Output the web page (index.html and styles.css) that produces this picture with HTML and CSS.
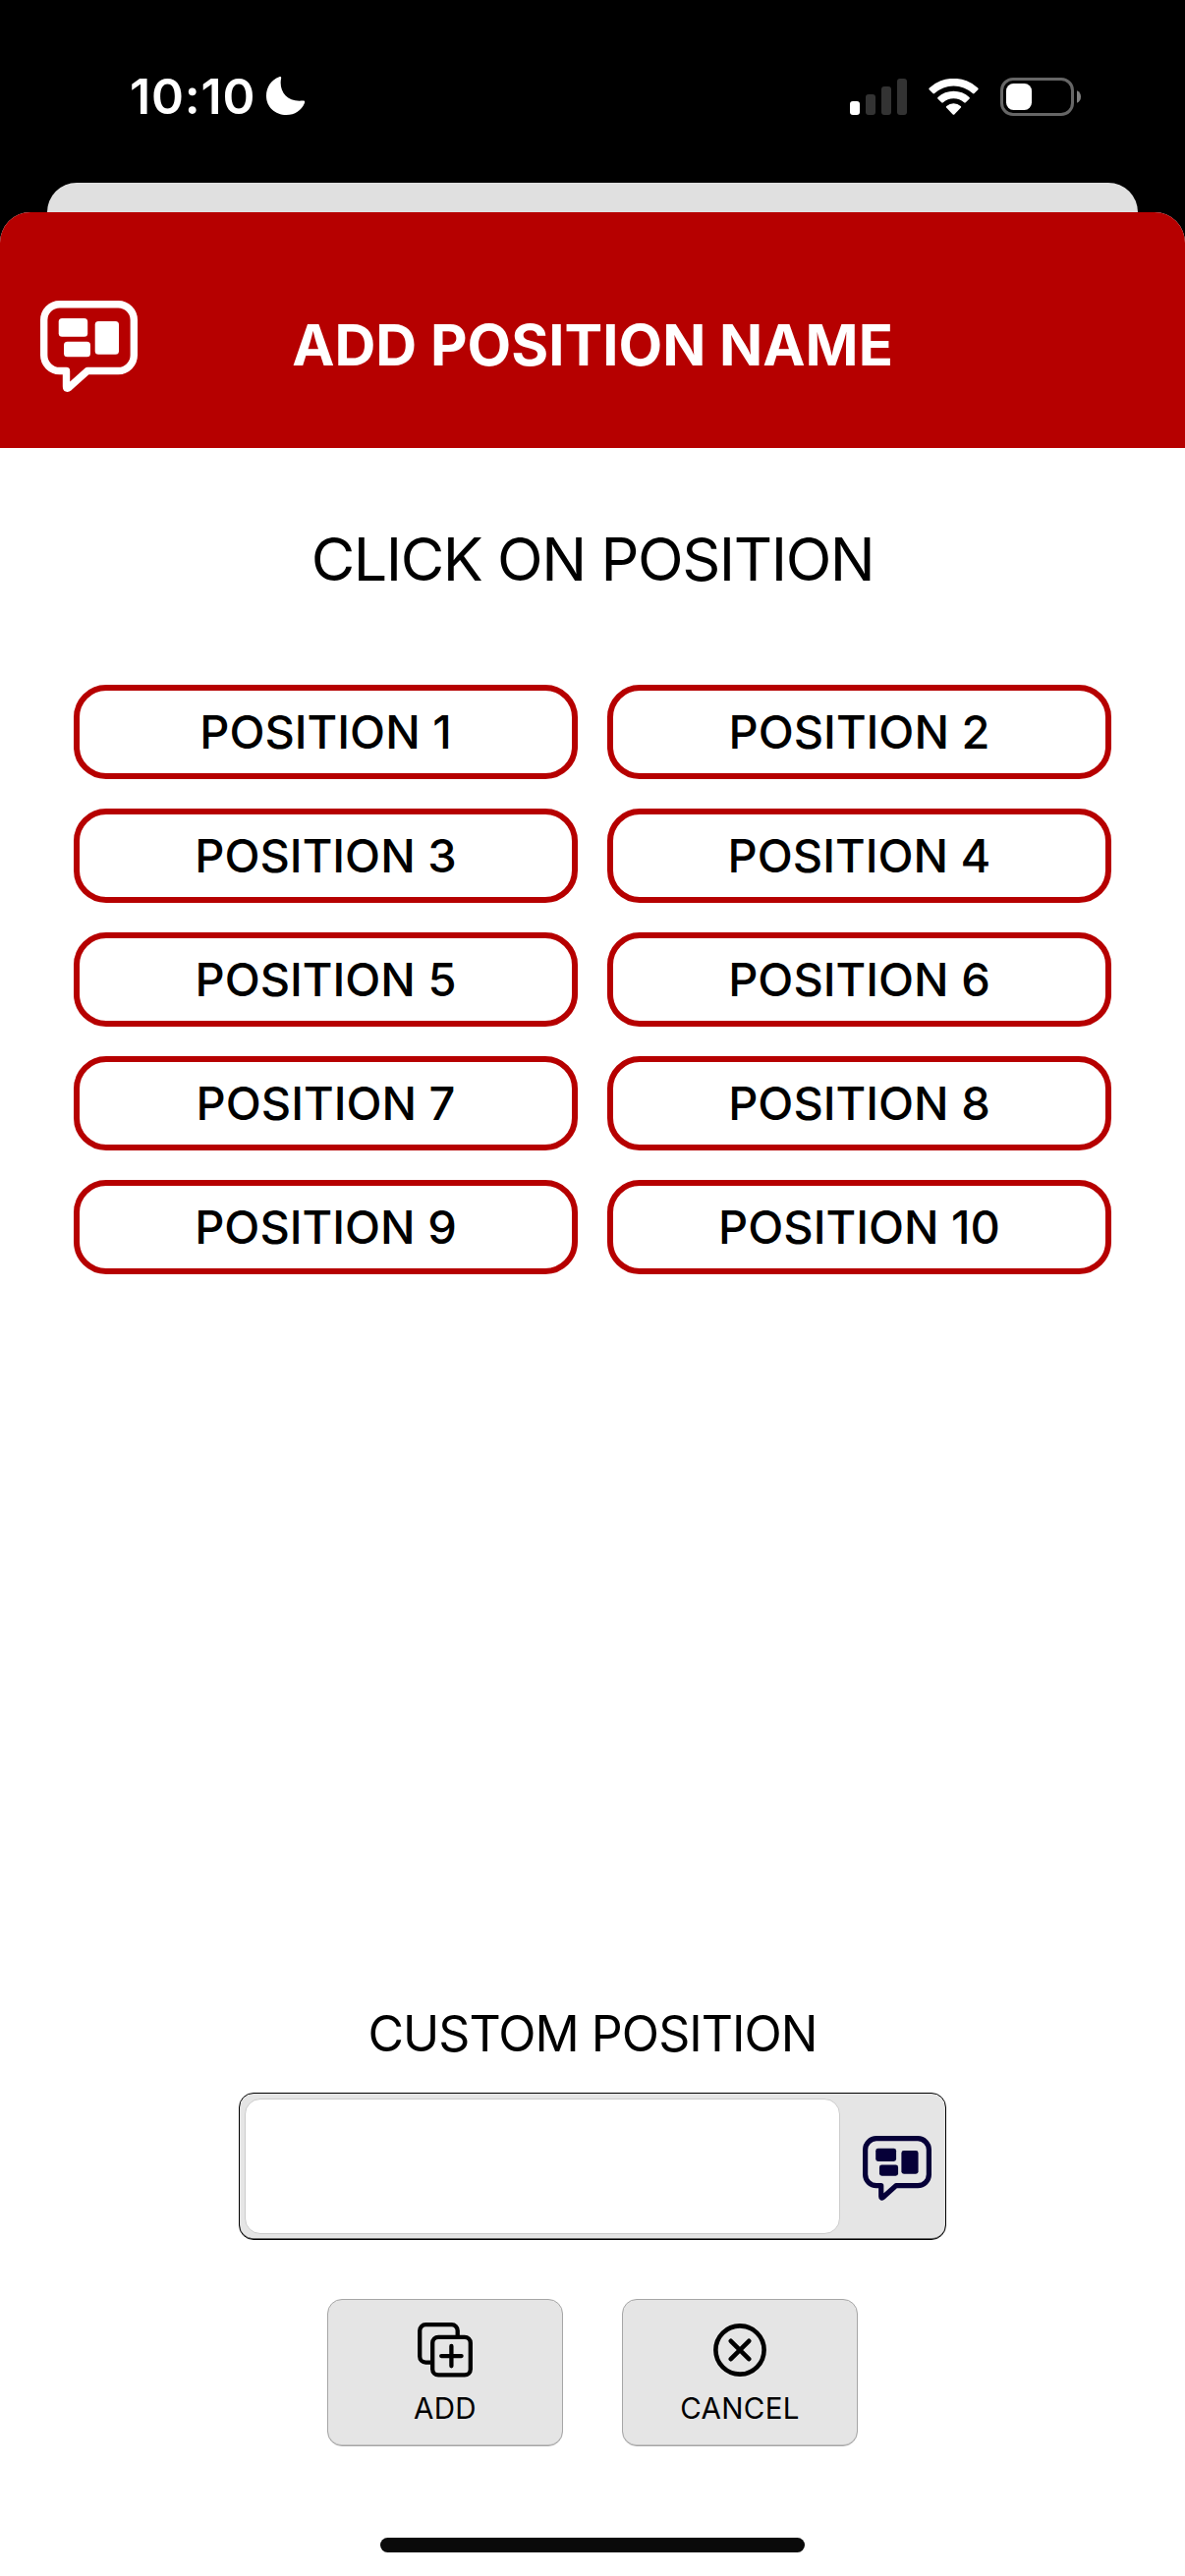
FILE: index.html
```html
<!DOCTYPE html>
<html lang="en">
<head>
    <meta charset="UTF-8">
    <meta name="viewport" content="width=device-width, initial-scale=1.0">
    <title>Add Position Name</title>
    <link rel="stylesheet" href="styles.css">
</head>
<body>
    <svg class="defs" width="0" height="0">
        <symbol id="bubble" viewBox="0 0 99 93">
            <path d="M19.7 3.7H79.3A16 16 0 0 1 95.3 19.7V55.5A16 16 0 0 1 79.3 71.5H48L29.3 88.3Q26.5 90.6 26.5 87.2V71.5H19.7A16 16 0 0 1 3.7 55.5V19.7A16 16 0 0 1 19.7 3.7Z" fill="none" stroke="currentColor" stroke-width="7.4" stroke-linejoin="round"/>
            <rect x="18.7" y="18" width="29.5" height="18.7" rx="3.5" fill="currentColor"/>
            <rect x="24" y="41.7" width="27" height="15.6" rx="3.5" fill="currentColor"/>
            <rect x="55.7" y="21" width="24.3" height="33.7" rx="3.5" fill="currentColor"/>
        </symbol>
    </svg>

    <div class="status-bar">
        <div class="status-left">
            <span class="time">10:10</span>
            <svg class="moon" width="40" height="40" viewBox="0 0 40 40">
                <path d="M13.2 .2C14.7-.3 15.5 .5 15.1 1.8C12.6 14.5 20.5 26.2 36.8 24.6C39 24.3 39.6 25.4 38.9 27C35.8 34.4 29 39 20.5 39C9 39 0 31 0 19.5C0 10.5 5.3 3 13.2 .2Z" fill="#fff"/>
            </svg>
        </div>
        <div class="status-right">
            <svg width="58" height="37" viewBox="0 0 58 37">
                <rect x="0" y="23" width="10" height="14" rx="3" fill="#fff"/>
                <rect x="16" y="16" width="10" height="21" rx="3" fill="#333"/>
                <rect x="32" y="8" width="10" height="29" rx="3" fill="#333"/>
                <rect x="48" y="0" width="10" height="37" rx="3" fill="#333"/>
            </svg>
            <svg class="wifi" width="51" height="37" viewBox="0 0 51 37" fill="#fff">
                <path d="M.6 11.2Q0 10.3 .8 9.5A36.4 36.4 0 0 1 50.2 9.5Q51 10.3 50.4 11.2L46.6 15Q45.8 15.8 44.9 15A28.6 28.6 0 0 0 6.1 15Q5.2 15.8 4.4 15Z"/>
                <path d="M9.3 20.4Q8.8 19.6 9.5 18.9A23.6 23.6 0 0 1 41.5 18.9Q42.2 19.6 41.7 20.4L37.8 24.3Q37 25.1 36.1 24.3A15.6 15.6 0 0 0 14.9 24.3Q14 25.1 13.2 24.3Z"/>
                <path d="M18.1 29.6Q17.4 28.8 18.3 28A11 11 0 0 1 32.7 28Q33.6 28.8 32.9 29.6L26.3 36.4Q25.5 37.2 24.7 36.4Z"/>
            </svg>
            <svg class="battery" width="83" height="39" viewBox="0 0 83 39">
                <rect x="1.5" y="1.5" width="72" height="36" rx="11.5" fill="none" stroke="#666" stroke-width="3"/>
                <rect x="6" y="6" width="26" height="27" rx="7.5" fill="#fff"/>
                <path d="M78 13.2Q82 15 82 19.5T78 25.8Z" fill="#808080"/>
            </svg>
        </div>
    </div>

    <div class="back-card"></div>

    <div class="sheet">
        <div class="header">
            <svg class="header-icon"><use href="#bubble"/></svg>
            <h1>ADD POSITION NAME</h1>
        </div>

        <h2>CLICK ON POSITION</h2>

        <div class="positions">
            <button class="position">POSITION 1</button>
            <button class="position">POSITION 2</button>
            <button class="position">POSITION 3</button>
            <button class="position">POSITION 4</button>
            <button class="position">POSITION 5</button>
            <button class="position">POSITION 6</button>
            <button class="position">POSITION 7</button>
            <button class="position">POSITION 8</button>
            <button class="position">POSITION 9</button>
            <button class="position">POSITION 10</button>
        </div>

        <div class="custom">
            <label for="custom">CUSTOM POSITION</label>
            <div class="input-box">
                <input type="text" id="custom" name="custom">
                <svg class="input-icon"><use href="#bubble"/></svg>
            </div>
        </div>

        <div class="actions">
            <button class="action">
                <svg width="56" height="56" viewBox="0 0 56 56" fill="none" stroke="#000" stroke-width="4.3" stroke-linecap="round">
                    <path d="M13 40.6H8.2A6 6 0 0 1 2.2 34.6V8.2A6 6 0 0 1 8.2 2.2H34.7A6 6 0 0 1 40.7 8.2V13" stroke-linecap="butt"/>
                    <rect x="15.2" y="14.8" width="38.6" height="38.6" rx="6"/>
                    <path d="M24.2 34.1H44.6M34.4 23.9V44.3"/>
                </svg>
                <span>ADD</span>
            </button>
            <button class="action">
                <svg width="56" height="56" viewBox="0 0 56 56" fill="none" stroke="#000" stroke-width="4.6" stroke-linecap="round">
                    <circle cx="28" cy="28" r="24.6"/>
                    <path d="M18.8 18.8L37.2 37.2M37.2 18.8L18.8 37.2"/>
                </svg>
                <span>CANCEL</span>
            </button>
        </div>

        <div class="home-bar"></div>
    </div>
</body>
</html>
```
FILE: styles.css
```css
* {
    box-sizing: border-box;
}
body {
    margin: 0;
    height: 2622px;
    background-color: #000;
    font-family: Inter, "Liberation Sans", sans-serif;
    display: flex;
    flex-direction: column;
    overflow: hidden;
}
svg {
    display: block;
    flex: none;
}
.defs {
    display: none;
}
button {
    font-family: inherit;
    color: #000;
    padding: 0;
    cursor: pointer;
}
.status-bar {
    height: 186px;
    padding: 10px 105px 0 132px;
    display: flex;
    justify-content: space-between;
    align-items: center;
    color: #fff;
}
.status-left,
.status-right {
    display: flex;
    align-items: center;
}
.time {
    width: 139px;
    font-size: 50px;
    font-weight: 600;
    letter-spacing: 0.8px;
    white-space: nowrap;
}
.wifi {
    margin-left: 22px;
}
.battery {
    margin-left: 22px;
}
.back-card {
    height: 30px;
    margin: 0 48px;
    background-color: #e0e0e0;
    border-radius: 30px 30px 0 0;
}
.sheet {
    flex: 1;
    display: flex;
    flex-direction: column;
    align-items: center;
    background-color: #fff;
    border-radius: 31px 31px 0 0;
    overflow: hidden;
}
.header {
    width: 100%;
    height: 240px;
    padding: 30px 41px 0;
    display: grid;
    grid-template-columns: 1fr auto 1fr;
    align-items: center;
    background-color: #b60000;
    color: #fff;
}
.header-icon {
    width: 99px;
    height: 93px;
    margin-top: 3px;
}
h1 {
    margin: 0;
    font-size: 58px;
    font-weight: 700;
    white-space: nowrap;
}
h2 {
    margin: 0;
    height: 241px;
    padding-bottom: 15px;
    display: flex;
    align-items: center;
    font-size: 61px;
    font-weight: 400;
    letter-spacing: -1.45px;
    white-space: nowrap;
}
.positions {
    display: grid;
    grid-template-columns: 513px 513px;
    gap: 30px;
}
.position {
    height: 96px;
    padding-bottom: 2px;
    border: 6px solid #b60000;
    border-radius: 33px;
    background-color: #fff;
    font-size: 47px;
    font-weight: 500;
}
.custom {
    margin-top: auto;
    display: flex;
    flex-direction: column;
    align-items: center;
}
label {
    height: 120px;
    line-height: 120px;
    font-size: 50px;
    letter-spacing: -0.95px;
    white-space: nowrap;
}
.input-box {
    width: 720px;
    height: 150px;
    padding: 0 14px 0 5px;
    display: flex;
    justify-content: space-between;
    align-items: center;
    border: 1px solid #000;
    border-radius: 15px;
    background-color: #e5e5e5;
    box-shadow: inset 0 -1px 0 #666;
}
input {
    width: 606px;
    height: 138px;
    padding: 0 20px;
    border: 1px solid #ccc;
    border-radius: 16px;
    background-color: #fff;
    font-family: inherit;
    font-size: 48px;
}
.input-icon {
    width: 70px;
    height: 66px;
    margin-top: 4px;
    color: #060038;
}
.actions {
    margin-top: 60px;
    display: flex;
    gap: 60px;
}
.action {
    width: 240px;
    height: 150px;
    padding-top: 3px;
    display: flex;
    flex-direction: column;
    align-items: center;
    justify-content: center;
    gap: 13px;
    border: 1px solid #a6a6a6;
    border-radius: 15px;
    background-color: #e5e5e5;
    box-shadow: inset 0 -1px 0 #c4c4c4;
    font-size: 29.5px;
    letter-spacing: 0.3px;
}
.home-bar {
    width: 432px;
    height: 15px;
    margin: 93px 0 24px;
    border-radius: 8px;
    background-color: #0a0a0a;
}
```
